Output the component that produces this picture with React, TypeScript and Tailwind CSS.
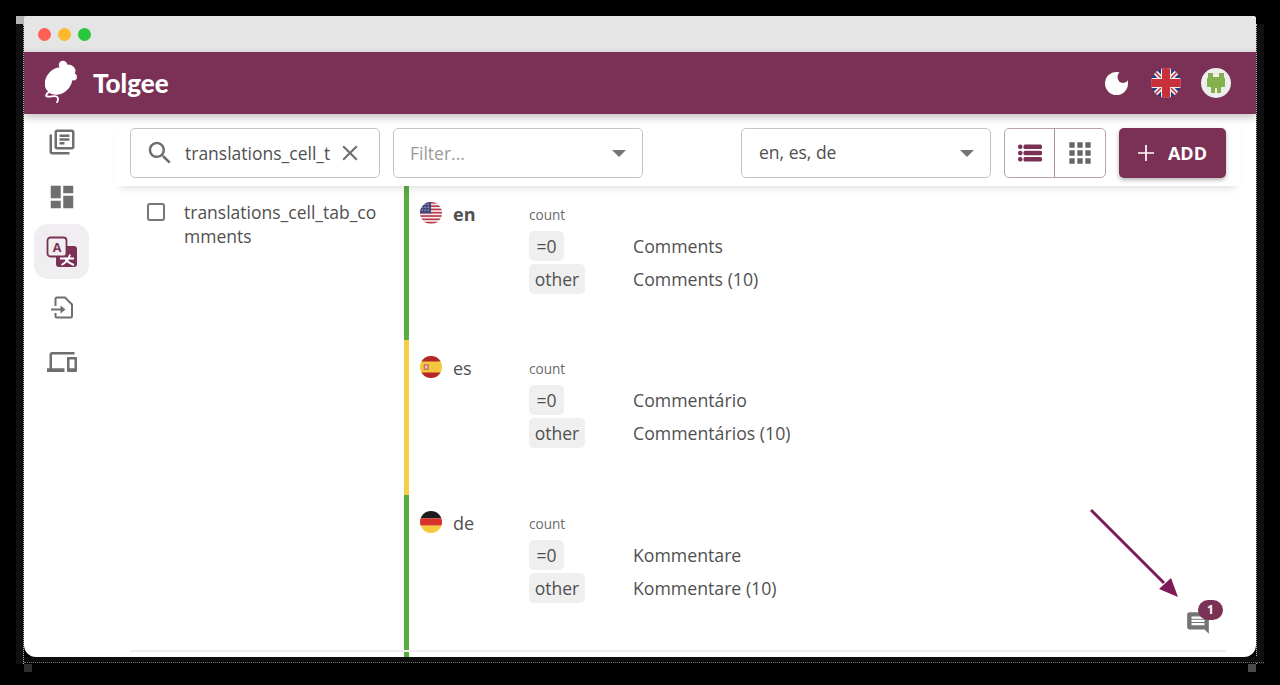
import React from 'react';

const PRIMARY = '#7b3156';

const LIBRARY = 'M4 6H2v14c0 1.1.9 2 2 2h14v-2H4V6zm16-4H8c-1.1 0-2 .9-2 2v12c0 1.1.9 2 2 2h12c1.1 0 2-.9 2-2V4c0-1.1-.9-2-2-2zm0 14H8V4h12v12zM10 9h8v2h-8zm0 3h4v2h-4zm0-6h8v2h-8z';
const DASHBOARD = 'M3 13h8V3H3v10zm0 8h8v-6H3v6zm10 0h8V11h-8v10zm0-18v6h8V3h-8z';
const DEVICES = 'M4 6h18V4H4c-1.1 0-2 .9-2 2v11H0v3h14v-3H4V6zm19 2h-6c-.55 0-1 .45-1 1v10c0 .55.45 1 1 1h6c.55 0 1-.45 1-1V9c0-.55-.45-1-1-1zm-1 9h-4v-7h4v7z';
const SEARCH = 'M15.5 14h-.79l-.28-.27C15.41 12.59 16 11.11 16 9.5 16 5.91 13.09 3 9.5 3S3 5.91 3 9.5 5.91 16 9.5 16c1.61 0 3.09-.59 4.23-1.57l.27.28v.79l5 4.99L20.49 19l-4.99-5zm-6 0C7.01 14 5 11.99 5 9.5S7.01 5 9.5 5 14 7.01 14 9.5 11.99 14 9.5 14z';
const CLOSE = 'M19 6.41 17.59 5 12 10.59 6.41 5 5 6.41 10.59 12 5 17.59 6.41 19 12 13.41 17.59 19 19 17.59 13.41 12z';
const APPS = 'M4 8h4V4H4v4zm6 12h4v-4h-4v4zm-6 0h4v-4H4v4zm0-6h4v-4H4v4zm6 0h4v-4h-4v4zm6-10v4h4V4h-4zm-6 4h4V4h-4v4zm6 6h4v-4h-4v4zm0 6h4v-4h-4v4z';
const COMMENT = 'M21.99 4c0-1.1-.89-2-1.99-2H4c-1.1 0-2 .9-2 2v12c0 1.1.9 2 2 2h14l4 4-.01-18zM18 14H6v-2h12v2zm0-3H6V9h12v2zm0-3H6V6h12v2z';

function Icon({ d, className }: { d: string; className?: string }) {
  return (
    <svg viewBox="0 0 24 24" fill="currentColor" className={className}>
      <path d={d} />
    </svg>
  );
}

function Logo() {
  return (
    <svg viewBox="0 0 34 43" className="-mt-[4px] h-[43px] w-[34px]" fill="white">
      <ellipse cx="13.500" cy="21" rx="15" ry="12.500" transform="rotate(-45 13.500 21)" />
      <circle cx="18" cy="5" r="4.200" />
      <ellipse cx="23" cy="11" rx="7.500" ry="6.500" />
      <circle cx="28.500" cy="17" r="3.400" />
      <path d="M4 32c-3 2-3.500 4-2 4.500 3 .7 6-.8 9-.2 2.500.6 2.500 3.700 1 6" fill="none" stroke="white" strokeWidth="1.800" strokeLinecap="round" />
    </svg>
  );
}

function Moon() {
  return (
    <svg viewBox="0 0 23 23" className="mr-[3px] h-[23px] w-[23px]">
      <circle cx="11.500" cy="11.500" r="11.500" fill="white" />
      <ellipse cx="18" cy="5" rx="5.500" ry="6" fill="#7b3156" />
    </svg>
  );
}

function TranslateIcon() {
  return (
    <svg viewBox="0 0 32 32" className="h-8 w-8">
      <rect x="10" y="10" width="21" height="21" rx="3" fill={PRIMARY} />
      <rect x="1.500" y="1.500" width="19" height="19" rx="3" fill="#f0eef0" stroke={PRIMARY} strokeWidth="1.800" />
      <text x="11" y="15.800" textAnchor="middle" fontSize="12.500" fontWeight="700" fontFamily="'Open Sans', sans-serif" fill={PRIMARY}>A</text>
      <path d="M14 22.500h14M24 18.500c-1 4.500-4 8-8.500 10.500M18.500 21.500c2 3.500 5 6 9.500 7.500" fill="none" stroke="white" strokeWidth="1.900" />
    </svg>
  );
}

function ImportIcon() {
  return (
    <svg viewBox="0 0 24 24" className="h-6 w-6" fill="none" stroke="#6f6f6f" strokeWidth="2">
      <path d="M5.500 11V4a1.500 1.500 0 0 1 1.500-1.500h8l7 7V21a1.500 1.500 0 0 1-1.500 1.500H7A1.500 1.500 0 0 1 5.500 21v-3" />
      <path d="M1 14.500h11" />
      <path d="M10.500 10.500l5 4-5 4z" fill="#6f6f6f" stroke="none" />
    </svg>
  );
}

function RoundFlag({ id, size, children }: { id: string; size: number; children: React.ReactNode }) {
  return (
    <svg viewBox="0 0 30 30" width={size} height={size} className="shrink-0">
      <defs>
        <clipPath id={id}>
          <circle cx="15" cy="15" r="15" />
        </clipPath>
      </defs>
      <g clipPath={`url(#${id})`}>{children}</g>
    </svg>
  );
}

function FlagUs() {
  const stripes = [0, 1, 2, 3, 4, 5, 6];
  return (
    <RoundFlag id="us" size={22}>
      <rect width="30" height="30" fill="#f3eeee" />
      {stripes.map((i) => (
        <rect key={i} y={i * 4.5} width="30" height="2.250" fill="#b8394a" />
      ))}
      <rect width="15" height="15.500" fill="#41477b" />
      {[3, 7, 11].map((y) =>
        [3, 7, 11].map((x) => <circle key={`${x}-${y}`} cx={x} cy={y} r="0.800" fill="#e8e6ee" />)
      )}
    </RoundFlag>
  );
}

function FlagEs() {
  return (
    <RoundFlag id="es" size={22}>
      <rect width="30" height="30" fill="#f4c63b" />
      <rect width="30" height="7.500" fill="#b3262a" />
      <rect y="22.500" width="30" height="7.500" fill="#b3262a" />
      <rect x="5" y="11" width="7" height="8" fill="#c9776a" />
      <rect x="7" y="13" width="3" height="4" fill="#e8c9c0" />
    </RoundFlag>
  );
}

function FlagDe() {
  return (
    <RoundFlag id="de" size={22}>
      <rect width="30" height="10" fill="#1c1c1c" />
      <rect y="10" width="30" height="10" fill="#d8312c" />
      <rect y="20" width="30" height="10" fill="#f6c83c" />
    </RoundFlag>
  );
}

function FlagGb() {
  return (
    <RoundFlag id="gb" size={30}>
      <rect width="30" height="30" fill="#2a3a7c" />
      <path d="M0 0l30 30M30 0L0 30" stroke="#eeeeee" strokeWidth="5" />
      <path d="M0 0l30 30M30 0L0 30" stroke="#c8303a" strokeWidth="1.500" />
      <rect x="10" width="10" height="30" fill="#eeeeee" />
      <rect y="10" width="30" height="10" fill="#eeeeee" />
      <rect x="11" width="8" height="30" fill="#c8303a" />
      <rect y="11" width="30" height="8" fill="#c8303a" />
    </RoundFlag>
  );
}

function Avatar() {
  return (
    <svg viewBox="0 0 30 30" className="h-[30px] w-[30px]">
      <circle cx="15" cy="15" r="15" fill="#eeeeee" />
      <path d="M7 5h5v4h6V5h5v5h1v9h-4v6h-4v-5h-2v5H10v-6H6v-9h1z" fill="#84b14e" />
    </svg>
  );
}

function ListIcon() {
  return (
    <svg viewBox="0 0 24 18" className="h-[18px] w-[24px]" fill="#7b3156">
      <rect y="0.500" width="4.500" height="4.500" rx="2" />
      <rect y="6.750" width="4.500" height="4.500" rx="2" />
      <rect y="13" width="4.500" height="4.500" rx="2" />
      <rect x="5.500" y="0.500" width="18.500" height="4.500" rx="1.500" />
      <rect x="5.500" y="6.750" width="18.500" height="4.500" rx="1.500" />
      <rect x="5.500" y="13" width="18.500" height="4.500" rx="1.500" />
    </svg>
  );
}

function Caret() {
  return <div className="h-0 w-0 border-x-[7px] border-t-[7px] border-x-transparent border-t-[#757575]" />;
}

function Chip({ children, className }: { children: React.ReactNode; className?: string }) {
  return (
    <span className={`flex h-[30px] items-center justify-center rounded-[5px] bg-[#efefef] text-[17.500px] ${className ?? ''}`}>
      {children}
    </span>
  );
}

interface RowProps {
  bar: string;
  flag: React.ReactNode;
  lang: string;
  bold?: boolean;
  zero: string;
  other: string;
  height: string;
}

function Row({ bar, flag, lang, bold, zero, other, height }: RowProps) {
  return (
    <div className={`flex ${height}`}>
      <div className={`w-[5px] shrink-0 ${bar}`} />
      <div className="flex w-[120px] shrink-0 gap-[11px] pl-[11px] pt-[16px]">
        {flag}
        <span className={`text-[18px] leading-[24px] ${bold ? 'font-bold' : ''}`}>{lang}</span>
      </div>
      <div className="pt-[20px]">
        <div className="text-[13.600px] leading-[18px] text-[#6b6b6b]">count</div>
        <div className="mt-[7px] grid grid-cols-[104px_1fr] items-center gap-y-[3px]">
          <div className="flex">
            <Chip className="w-[35px]">=0</Chip>
          </div>
          <span className="pt-[1px] text-[17.700px]">{zero}</span>
          <div className="flex">
            <Chip className="w-[56px]">other</Chip>
          </div>
          <span className="pt-[1px] text-[17.700px]">{other}</span>
        </div>
      </div>
    </div>
  );
}

const NAV = [
  <Icon d={LIBRARY} className="h-[30px] w-[30px] text-[#6f6f6f]" />,
  <Icon d={DASHBOARD} className="h-[30px] w-[30px] text-[#6f6f6f]" />,
  <TranslateIcon />,
  <ImportIcon />,
  <Icon d={DEVICES} className="h-[30px] w-[30px] text-[#6f6f6f]" />,
];

export default function App() {
  return (
    <div className="relative h-[685px] w-[1280px] overflow-hidden bg-black px-6 pt-4 font-['Open_Sans',sans-serif] text-[#505050]">
      {/* capture leftovers round the window */}
      <span className="absolute left-[16px] top-[16px] h-[8px] w-[16px] bg-[#b5b5b5]" />
      <span className="absolute left-[16px] top-[24px] h-[640px] w-[8px] border-r border-dotted border-white/70 bg-[#111111]" />
      <span className="absolute left-[1256px] top-[24px] h-[640px] w-[8px] border-l border-dotted border-white/70 bg-[#111111]" />
      <span className="absolute left-[24px] top-[657px] h-[6px] w-[1240px] border-b border-dotted border-white/40 bg-[#0d0d0d]" />
      <span className="absolute left-[24px] top-[664px] h-[8px] w-[8px] bg-[#2e2e2e]" />
      <span className="absolute left-[1248px] top-[664px] h-[8px] w-[8px] bg-[#4a4a4a]" />

      <div className="relative flex h-[641px] flex-col overflow-hidden rounded-b-[12px] rounded-t-[3px] bg-white">
        {/* window chrome */}
        <div className="flex h-9 shrink-0 items-center gap-[7px] bg-[#e5e5e5] pl-[14px]">
          <span className="h-[13px] w-[13px] rounded-full bg-[#fe5f57]" />
          <span className="h-[13px] w-[13px] rounded-full bg-[#fdb92d]" />
          <span className="h-[13px] w-[13px] rounded-full bg-[#28c53f]" />
        </div>

        {/* app bar */}
        <header className="z-20 flex h-[62px] shrink-0 items-center bg-[#7b3156] pl-[21px] pr-[25px] shadow-[0_3px_8px_rgba(0,0,0,0.25)]">
          <Logo />
          <span className="ml-[14px] font-['Lato',sans-serif] text-[26px] font-black text-white">Tolgee</span>
          <div className="ml-auto flex items-center gap-5">
            <Moon />
            <FlagGb />
            <Avatar />
          </div>
        </header>

        <div className="flex min-h-0 flex-1">
          {/* side menu */}
          <nav className="flex w-[91px] shrink-0 flex-col pl-[10px]">
            {NAV.map((icon, i) => (
              <div
                key={i}
                className={`flex h-[55px] w-[55px] items-center justify-center rounded-[14px] ${i === 2 ? 'bg-[#f0eef0]' : ''}`}
              >
                {icon}
              </div>
            ))}
          </nav>

          <main className="flex min-w-0 flex-1 flex-col">
            {/* toolbar */}
            <div className="z-10 mr-4 flex h-[72px] shrink-0 items-start bg-white pl-[15px] pt-[14px] shadow-[0_7px_8px_-5px_rgba(0,0,0,0.13)]">
              <div className="flex h-[50px] w-[250px] items-center rounded-[5px] border border-[#c4c4c4] pl-[14px]">
                <Icon d={SEARCH} className="h-[30px] w-[30px] shrink-0 text-[#6f6f6f]" />
                <span className="ml-[10px] w-[144px] whitespace-nowrap text-[17.500px]">translations_cell_t</span>
                <Icon d={CLOSE} className="ml-[8px] h-[26px] w-[26px] shrink-0 text-[#6f6f6f]" />
              </div>
              <div className="ml-[13px] flex h-[50px] w-[250px] items-center justify-between rounded-[5px] border border-[#c4c4c4] pl-4 pr-[16px]">
                <span className="text-[17.500px] text-[#9a9a9a]">Filter...</span>
                <Caret />
              </div>
              <div className="ml-[98px] flex h-[50px] w-[250px] items-center justify-between rounded-[5px] border border-[#c4c4c4] pl-[17px] pr-[16px]">
                <span className="-mt-[1px] text-[17.500px]">en, es, de</span>
                <Caret />
              </div>
              <div className="ml-[13px] flex h-[50px] w-[102px] overflow-hidden rounded-[5px] border border-[#b9a3af]">
                <div className="flex w-[50px] items-center justify-center border-r border-[#a98f9d]">
                  <ListIcon />
                </div>
                <div className="flex flex-1 items-center justify-center">
                  <Icon d={APPS} className="h-[32px] w-[32px] text-[#666666]" />
                </div>
              </div>
              <div className="ml-[13px] flex h-[50px] w-[107px] items-center justify-center gap-[14px] rounded-[5px] bg-[#7b3156] text-white shadow-[0_2px_4px_rgba(0,0,0,0.3)]">
                <svg viewBox="0 0 16 16" className="h-4 w-4" stroke="white" strokeWidth="1.700">
                  <path d="M8 0v16M0 8h16" />
                </svg>
                <span className="text-[18px] font-bold">ADD</span>
              </div>
            </div>

            {/* translation row */}
            <div className="flex min-h-0 flex-1 pl-[15px] pr-[30px]">
              <div className="flex w-[274px] shrink-0 items-start pl-[17px] pt-[14px]">
                <span className="mt-[3px] h-[18px] w-[18px] shrink-0 rounded-[3px] border-2 border-[#757575]" />
                <span className="ml-[19px] w-[198px] break-all text-[17.500px] leading-[24px]">translations_cell_tab_comments</span>
              </div>
              <div className="min-w-0 flex-1">
                <Row bar="bg-[#58ad41]" flag={<FlagUs />} lang="en" bold zero="Comments" other="Comments (10)" height="h-[154px]" />
                <Row bar="bg-[#f5cf4a]" flag={<FlagEs />} lang="es" zero="Commentário" other="Commentários (10)" height="h-[155px]" />
                <Row bar="bg-[#58ad41]" flag={<FlagDe />} lang="de" zero="Kommentare" other="Kommentare (10)" height="h-[155px]" />
                <div className="relative z-0 -ml-[274px] h-[2px] bg-[#eeeeee]" />
                <div className="h-[5px] w-[5px] bg-[#58ad41]" />
              </div>
            </div>
          </main>
        </div>

        {/* comment icon with badge */}
        <Icon d={COMMENT} className="absolute left-[1161px] top-[594px] h-[26px] w-[26px] text-[#757575]" />
        <span className="absolute left-[1174px] top-[584px] flex h-[20px] w-[25px] items-center justify-center rounded-full bg-[#7b3156] text-[12px] font-bold text-white">1</span>

        {/* annotation arrow */}
        <svg viewBox="0 0 110 110" className="absolute left-[1060px] top-[490px] h-[110px] w-[110px]">
          <path d="M7 4L80 77" stroke="#7e1a58" strokeWidth="3" fill="none" />
          <path d="M94 91L75 83L87 72z" fill="#7e1a58" />
        </svg>
      </div>
    </div>
  );
}
